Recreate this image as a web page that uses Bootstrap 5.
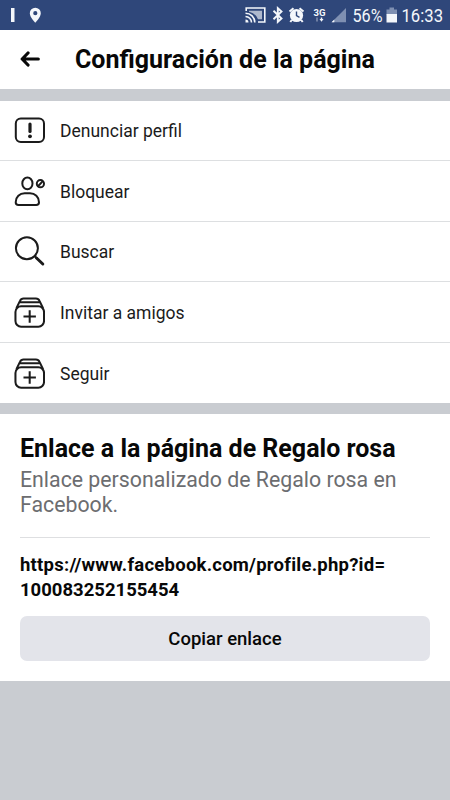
<!DOCTYPE html>
<html lang="es">
<head>
<meta charset="utf-8">
<meta name="viewport" content="width=device-width, initial-scale=1">
<title>Configuración de la página</title>
<link href="https://cdn.jsdelivr.net/npm/bootstrap@5.3.0/dist/css/bootstrap.min.css" rel="stylesheet">
<style>
body{font-family:Roboto,"Noto Sans",sans-serif;background:#c9ccd1;color:#080808;overflow:hidden}
svg{display:block;flex:none}
.status{height:30px;background:#2f477a;color:#f4f7fb;padding:0 3px 0 0}
.topbar{height:59px;padding:0 20px}
.topbar svg{margin-bottom:1px}
.topbar h1{font-size:25px;line-height:30px;margin-left:35px;padding-top:1px}
.menu{margin-top:11.5px;--bs-list-group-border-radius:0}
.menu .list-group-item{height:60.6px;padding:0 14px;gap:15px;border:0;border-bottom:1px solid #dddfe1;color:#1b1b1b;font-size:17.5px;line-height:24px}
.menu .list-group-item span{padding-top:2px}
.menu .list-group-item:last-child{border-bottom:0}
.link-panel{margin-top:10.5px;height:267.5px;padding:20px 20px 0}
.link-panel h2{font-size:25px;line-height:30px}
.desc{font-size:21.3px;line-height:25px;color:#6c6d70;margin-top:3px}
.rule{height:1px;background:#dedfe1;margin:20px 0 15px}
.url{font-size:18.5px;line-height:25px}
.url-head{letter-spacing:.24px}
.btn-copy{height:45px;margin-top:13px;padding:0;border:0;border-radius:7px;background:#e3e4ea;font-size:18.5px;line-height:46px;color:#080808}
</style>
<script src="https://cdn.jsdelivr.net/npm/bootstrap@5.3.0/dist/js/bootstrap.bundle.min.js"></script>
</head>
<body>
<header class="status d-flex justify-content-between align-items-center">
  <svg width="60" height="30" fill="currentColor"><path d="M11 8h3.500v14H11z"/><path fill-rule="evenodd" d="M35.300 7.700a5.500 5.500 0 0 0-5.500 5.500c0 4 5.500 9.500 5.500 9.500s5.500-5.500 5.500-9.500a5.500 5.500 0 0 0-5.500-5.500zm0 3.400a2.100 2.100 0 1 1 0 4.200 2.100 2.100 0 0 1 0-4.200z"/></svg>
  <div class="d-flex align-items-center">
    <svg width="108" height="30" viewBox="240 0 108 30" fill="none" stroke="currentColor">
      <path d="M246.200 11V8h18.600v14H258" stroke-width="1.600"/>
      <path d="M249 10.700h13v8.600h-4a12 12 0 0 0-9-7.500z" fill="currentColor" fill-opacity=".65" stroke="none"/>
      <path d="M245.500 13.200a9.300 9.300 0 0 1 9.300 9.300M245.500 16.500a6 6 0 0 1 6 6" stroke-width="1.600"/><path d="M245.500 19.500a3 3 0 0 1 3 3h-3z" fill="currentColor" stroke="none"/>
      <path d="M273.500 10.800l8 7.700-3.700 3.300V8.200l3.700 3.300-8 7.700" stroke-width="1.900"/>
      <circle cx="296.500" cy="15.500" r="6.600" fill="currentColor" stroke="none"/>
      <path d="M289.500 11.500l4-3.300M303.500 11.500l-4-3.300M291.800 20l-1.500 2M301.200 20l1.500 2" stroke-width="2"/>
      <path d="M296.500 11.500v4.200l3 1.600" stroke="#2f477a" stroke-width="1.400"/>
      <text x="313.500" y="15.500" font-size="9.500" font-weight="700" fill="currentColor" stroke="none" textLength="12" lengthAdjust="spacingAndGlyphs">3G</text>
      <path d="M321.500 17.500v2.500" stroke-width="1.500"/><path d="M319.500 19h4l-2 2.800z" fill="currentColor" stroke="none"/><path d="M317 17.500v4" stroke-width="1.300" opacity=".5"/>
      <path d="M346 8v14.300h-14.300z" fill="#7f90b2" stroke="none"/><path d="M334.300 19.500v2.800h-2.800z" fill="currentColor" stroke="none"/>
    </svg>
    <svg width="99" height="30" viewBox="348 0 99 30" fill="currentColor"><text x="352.500" y="22" font-size="18.500" textLength="30" lengthAdjust="spacingAndGlyphs">56%</text><path d="M389.500 7.500h4.500v2h3v5h-10.500v-5h3z" fill="#7f90b2"/><path d="M386.500 14H397v8.500h-10.500z"/><text x="401.500" y="22" font-size="18.500" textLength="41.500" lengthAdjust="spacingAndGlyphs">16:33</text></svg>
  </div>
</header>
<div class="topbar bg-white d-flex align-items-center">
  <svg width="20" height="18" viewBox="0 0 20 18" fill="none" stroke="currentColor" stroke-width="3.200" stroke-linecap="round" stroke-linejoin="round"><path d="M18.300 9H2.200M8 3L2.200 9 8 15"/></svg>
  <h1 class="mb-0 fw-bold text-nowrap">Configuración de la página</h1>
</div>
<svg width="0" height="0" class="position-absolute"><defs><g id="stack"><rect x="1.500" y="9.600" width="29.500" height="21" rx="5.800"/><path d="M2.500 11.500L6.300 3.800Q7.300 1.500 9.800 1.500h12.900q2.500 0 3.500 2.300l3.800 7.700M6 5.500h20.500M16.200 13.700v12.800M9.800 20.100h12.800"/></g></defs></svg>
<div class="menu list-group list-group-flush">
  <a class="list-group-item d-flex align-items-center" href="#"><svg width="31" height="32" viewBox="0 0 31 32" fill="none" stroke="currentColor" stroke-width="2"><rect x="1.800" y="4.500" width="28.200" height="23.500" rx="5"/><path d="M16 10v7.500" stroke-width="3.200" stroke-linecap="round"/><circle cx="16" cy="22.300" r="1.900" fill="currentColor" stroke="none"/></svg><span>Denunciar perfil</span></a>
  <a class="list-group-item d-flex align-items-center" href="#"><svg width="31" height="32" viewBox="0 0 31 32" fill="none" stroke="currentColor" stroke-width="2"><ellipse cx="13.400" cy="8.400" rx="5.100" ry="5.900"/><path d="M4.500 30c-2 0-2.800-1-2.800-2.800 0-5.300 4-8.900 9-8.900H16c5 0 9 3.600 9 8.900 0 1.800-.8 2.800-2.800 2.800z"/><circle cx="26.400" cy="8.700" r="3.600"/><path d="M24 11.300l4.800-5.200"/></svg><span>Bloquear</span></a>
  <a class="list-group-item d-flex align-items-center" href="#"><svg width="31" height="32" viewBox="0 0 31 32" fill="none" stroke="currentColor" stroke-width="2" stroke-linecap="round"><circle cx="12.900" cy="13.300" r="11"/><path d="M20.800 21.300l2 2"/><path d="M22.500 23l6.300 6" stroke-width="3"/></svg><span>Buscar</span></a>
  <a class="list-group-item d-flex align-items-center" href="#"><svg width="31" height="31" viewBox="0 0 32 32" fill="none" stroke="currentColor" stroke-width="2.100"><use href="#stack"/></svg><span>Invitar a amigos</span></a>
  <a class="list-group-item d-flex align-items-center" href="#"><svg width="31" height="31" viewBox="0 0 32 32" fill="none" stroke="currentColor" stroke-width="2.100"><use href="#stack"/></svg><span>Seguir</span></a>
</div>
<section class="link-panel bg-white">
  <h2 class="mb-0 fw-bold text-nowrap">Enlace a la página de Regalo rosa</h2>
  <p class="desc mb-0 text-nowrap">Enlace personalizado de Regalo rosa en<br>Facebook.</p>
  <div class="rule"></div>
  <div class="url fw-bold"><span class="url-head">https://www.facebook.com/profile.php?id=</span><br>100083252155454</div>
  <button type="button" class="btn btn-copy w-100 fw-medium">Copiar enlace</button>
</section>
</body>
</html>
